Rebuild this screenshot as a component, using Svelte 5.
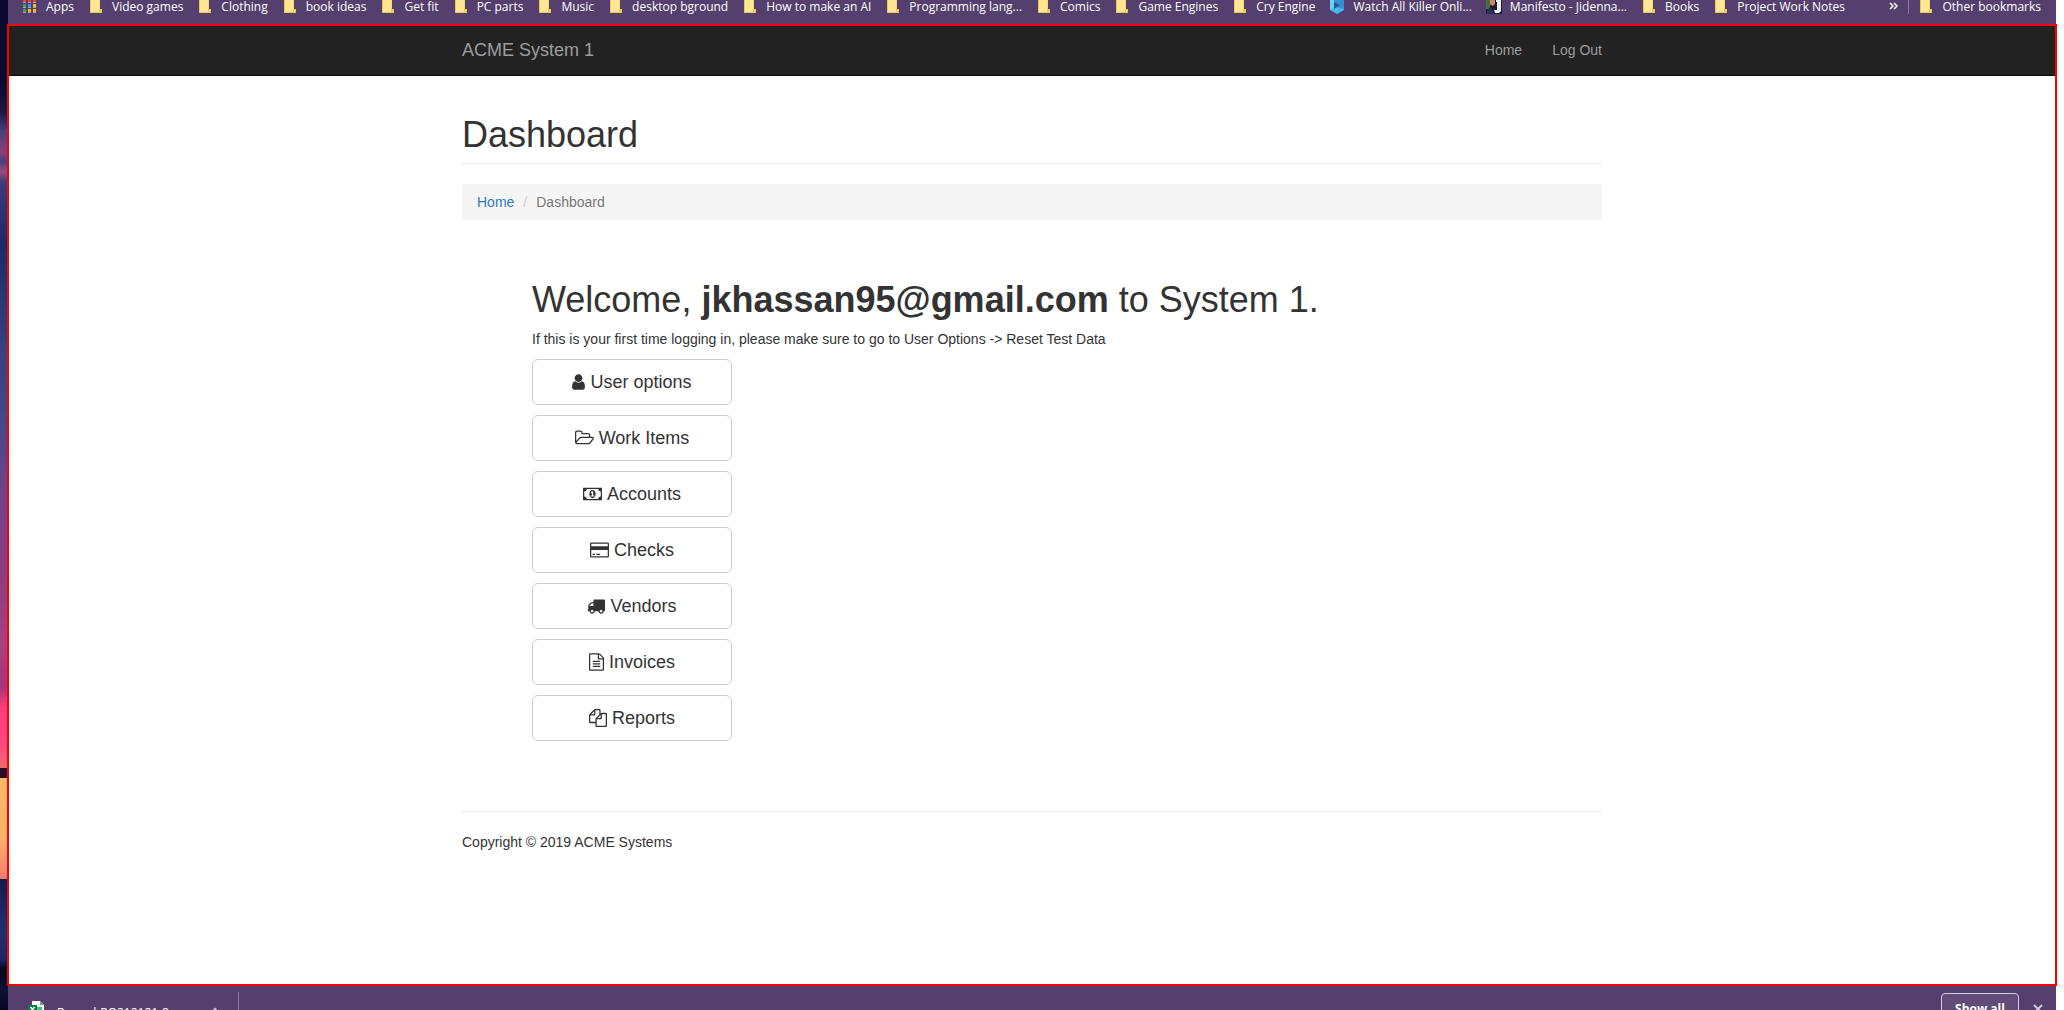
<script>
  const bookmarks = [
    { label: 'Video games' },
    { label: 'Clothing' },
    { label: 'book ideas' },
    { label: 'Get fit' },
    { label: 'PC parts' },
    { label: 'Music' },
    { label: 'desktop bground' },
    { label: 'How to make an AI' },
    { label: 'Programming lang...' },
    { label: 'Comics' },
    { label: 'Game Engines' },
    { label: 'Cry Engine' },
    { label: 'Watch All Killer Onli...', icon: 'cube' },
    { label: 'Manifesto - Jidenna...', icon: 'photo' },
    { label: 'Books' },
    { label: 'Project Work Notes' }
  ];

  const appDots = ['#ea4335', '#ea4335', '#ea4335', '#34a853', '#4285f4', '#fbbc05', '#34a853', '#fbbc05', '#fbbc05'];

  const actions = [
    {
      label: 'User options',
      box: '256 0 1280 1792',
      width: 13,
      path: 'M1536 1399q0 109-62.5 187t-150.5 78h-854q-88 0-150.5-78t-62.5-187q0-85 8.5-160.5t31.5-152 58.5-131 94-89 134.5-34.5q131 128 313 128t313-128q76 0 134.5 34.5t94 89 58.5 131 31.5 152 8.5 160.5zm-256-887q0 159-112.5 271.5t-271.5 112.5-271.5-112.5-112.5-271.5 112.5-271.5 271.5-112.5 271.5 112.5 112.5 271.5z'
    },
    {
      label: 'Work Items',
      box: '64 0 1920 1792',
      width: 19,
      path: 'M1845 931q0-35-53-35h-1088q-40 0-85.5 21.5t-71.5 52.5l-294 363q-18 24-18 40 0 35 53 35h1088q40 0 86-22t71-53l294-363q18-22 18-39zm-1141-163h768v-160q0-40-28-68t-68-28h-576q-40 0-68-28t-28-68v-64q0-40-28-68t-68-28h-320q-40 0-68 28t-28 68v853l256-315q44-53 116-87.5t140-34.5zm1269 163q0 62-46 120l-295 363q-43 53-116 87.5t-140 34.5h-1088q-92 0-158-66t-66-158v-960q0-92 66-158t158-66h320q92 0 158 66t66 158v32h544q92 0 158 66t66 158v160h192q54 0 99 24.5t67 70.5q15 32 15 68z'
    },
    {
      label: 'Accounts',
      box: '64 0 1920 1792',
      width: 19,
      path: 'M832 1152h384v-96h-128v-448h-114l-148 137 77 80q42-37 55-57h2v288h-128v96zm512-256q0 70-21 142t-59.5 134-101.5 101-138 39-138-39-101.5-101-59.5-134-21-142 21-142 59.5-134 101.5-101 138-39 138 39 101.5 101 59.5 134 21 142zm512 256v-512q-106 0-181-75t-75-181h-1152q0 106-75 181t-181 75v512q106 0 181 75t75 181h1152q0-106 75-181t181-75zm128-832v1152q0 26-19 45t-45 19h-1792q-26 0-45-19t-19-45v-1152q0-26 19-45t45-19h1792q26 0 45 19t19 45z'
    },
    {
      label: 'Checks',
      box: '64 0 1920 1792',
      width: 19,
      path: 'M1824 128q66 0 113 47t47 113v1216q0 66-47 113t-113 47h-1600q-66 0-113-47t-47-113v-1216q0-66 47-113t113-47h1600zm-1600 128q-13 0-22.500 9.500t-9.500 22.500v224h1664v-224q0-13-9.500-22.500t-22.500-9.500h-1600zm1600 1280q13 0 22.500-9.500t9.500-22.500v-608h-1664v608q0 13 9.500 22.500t22.500 9.500h1600zm-1504-128v-128h256v128h-256zm384 0v-128h384v128h-384z'
    },
    {
      label: 'Vendors',
      box: '0 0 1792 1792',
      width: 18,
      path: 'M640 1408q0-52-38-90t-90-38-90 38-38 90 38 90 90 38 90-38 38-90zm-384-512h384v-256h-158q-13 0-22 9l-195 195q-9 9-9 22v30zm1280 512q0-52-38-90t-90-38-90 38-38 90 38 90 90 38 90-38 38-90zm256-1088v1024q0 15-4 26.500t-13.500 18.500-16.500 11.500-23.500 6-22.500 2-25.500 0-22.500-.5q0 106-75 181t-181 75-181-75-75-181h-384q0 106-75 181t-181 75-181-75-75-181h-64q-3 0-22.500.5t-25.500 0-22.500-2-23.500-6-16.500-11.500-13.500-18.500-4-26.500q0-26 19-45t45-19v-320q0-8-.5-35t0-38 2.500-34.500 6.500-37 14-30.500 22.500-30l198-198q19-19 50.500-32t58.500-13h160v-192q0-26 19-45t45-19h1024q26 0 45 19t19 45z'
    },
    {
      label: 'Invoices',
      box: '128 0 1536 1792',
      width: 15,
      path: 'M1596 380q28 28 48 76t20 88v1152q0 40-28 68t-68 28h-1344q-40 0-68-28t-28-68v-1600q0-40 28-68t68-28h896q40 0 88 20t76 48zm-444-244v376h376q-10-29-22-41l-313-313q-12-12-41-22zm384 1528v-1024h-416q-40 0-68-28t-28-68v-416h-768v1536h1280zm-1024-864q0-14 9-23t23-9h704q14 0 23 9t9 23v64q0 14-9 23t-23 9h-704q-14 0-23-9t-9-23v-64zm736 224q14 0 23 9t9 23v64q0 14-9 23t-23 9h-704q-14 0-23-9t-9-23v-64q0-14 9-23t23-9h704zm0 256q14 0 23 9t9 23v64q0 14-9 23t-23 9h-704q-14 0-23-9t-9-23v-64q0-14 9-23t23-9h704z'
    },
    {
      label: 'Reports',
      box: '0 0 1792 1792',
      width: 18,
      path: 'M1696 384q40 0 68 28t28 68v1216q0 40-28 68t-68 28h-960q-40 0-68-28t-28-68v-288h-544q-40 0-68-28t-28-68v-672q0-40 20-88t48-76l408-408q28-28 76-48t88-20h416q40 0 68 28t28 68v328q68-40 128-40h416zm-544 213l-299 299h299v-299zm-640-384l-299 299h299v-299zm196 647l316-316v-416h-384v416q0 40-28 68t-68 28h-416v640h512v-256q0-40 20-88t48-76zm956 804v-1152h-384v416q0 40-28 68t-68 28h-416v640h896z'
    }
  ];
</script>

{#snippet folder()}
  <svg class="favicon" viewBox="0 0 16 14" aria-hidden="true">
    <path d="M2 0h10v9h2v4H2z" fill="#ffe694" />
    <path d="M2 0h1v12h8v-3h3v4H2z" fill="#e9c84e" />
    <path d="M12 10h1v2h-1zM11 0h1v9h-1z" fill="#f3d870" />
  </svg>
{/snippet}

<div class="desktop">
  <div class="wallpaper"></div>
  <div class="browser">
    <nav class="bookmarks" aria-label="Bookmarks">
      <a class="bookmark" href="#apps">
        <svg class="favicon" viewBox="0 0 16 14" aria-hidden="true">
          {#each appDots as color, i}
            <rect x={1 + (i % 3) * 5} y={-1 + Math.floor(i / 3) * 5} width="3" height="3" fill={color} />
            <rect x={1 + (i % 3) * 5} y={2 + Math.floor(i / 3) * 5} width="3" height="1" fill="#a99fb8" />
          {/each}
        </svg>
        Apps
      </a>
      {#each bookmarks as b}
        <a class="bookmark" href="#bookmark">
          {#if b.icon === 'cube'}
            <svg class="favicon" viewBox="0 0 16 14" aria-hidden="true">
              <path d="M1 0h14v9l-7 4-7-4z" fill="#3a8fd0" />
              <path d="M1 0h4v8l-4 2z" fill="#6fd0f5" />
              <path d="M1 10l5-3 9 2v1l-7 4z" fill="#42b8ec" />
              <path d="M5 2l6 3-6 4z" fill="#245a98" />
            </svg>
          {:else if b.icon === 'photo'}
            <svg class="favicon" viewBox="0 0 16 14" aria-hidden="true">
              <path d="M0 0h16v14H0z" fill="#1b1c2b" />
              <path d="M0 0h5v4l-2 5H0z" fill="#4e6b3c" />
              <path d="M4 0h5v4l-2 2-3-2z" fill="#c98a6a" />
              <path d="M1 10l4-3 3 7H1z" fill="#27345c" />
              <path d="M10 0h5v11l-2 2H9l-1-3h3V2h-1z" fill="#f2f2f2" />
            </svg>
          {:else}
            {@render folder()}
          {/if}
          {b.label}
        </a>
      {/each}
      <button class="overflow" aria-label="More bookmarks">
        <svg width="9" height="8" viewBox="0 0 9 8" fill="none" stroke="#fff" stroke-width="1.5">
          <path d="M1 1l3 3-3 3M5 1l3 3-3 3" />
        </svg>
      </button>
      <a class="bookmark other" href="#other">{@render folder()}Other bookmarks</a>
    </nav>

    <div class="viewport">
      <header class="navbar">
        <div class="container navrow">
          <a class="brand" href="#home">ACME System 1</a>
          <nav class="links" aria-label="Main">
            <a href="#home">Home</a>
            <a href="#logout">Log Out</a>
          </nav>
        </div>
      </header>

      <main class="container">
        <h1 class="title">Dashboard</h1>
        <ol class="breadcrumb">
          <li><a href="#home">Home</a></li>
          <li class="current">Dashboard</li>
        </ol>

        <section class="welcome">
          <h1>Welcome, <b>jkhassan95@gmail.com</b> to System 1.</h1>
          <p>If this is your first time logging in, please make sure to go to User Options -&gt; Reset Test Data</p>
          <div class="actions">
            {#each actions as a}
              <button class="action">
                <svg width={a.width} height="18" viewBox={a.box} aria-hidden="true"><path d={a.path} fill="currentColor" /></svg>
                {a.label}
              </button>
            {/each}
          </div>
        </section>

        <footer>Copyright © 2019 ACME Systems</footer>
      </main>
    </div>

    <div class="downloads">
      <button class="file">
        <svg class="sheet" viewBox="0 0 16 16" aria-hidden="true">
          <path d="M4 0h8l4 4v12H4z" fill="#fff" />
          <path d="M12 0l4 4h-4z" fill="#8a8a8a" />
          <path d="M9 6h5v10H9z" fill="#33c481" />
          <path d="M0 4h9v9H0z" fill="#107c41" />
          <path d="M2.500 6l4 5m0-5l-4 5" stroke="#fff" stroke-width="1.500" />
        </svg>
        <span class="name">Record-RO212121-8....</span>
        <svg class="caret" viewBox="0 0 8 6" fill="none" stroke="#c9c2d3" stroke-width="2"><path d="M1 5l3-3 3 3" /></svg>
      </button>
      <button class="showall">Show all</button>
      <button class="close" aria-label="Close">
        <svg width="10" height="10" viewBox="0 0 10 10" stroke="#d0cad8" stroke-width="2"><path d="M1 1l8 8M9 1l-8 8" /></svg>
      </button>
    </div>
  </div>
</div>

<style>
  :global(body) {
    background: #fff;
  }
  .desktop {
    display: grid;
    grid-template-columns: 7px minmax(0, 1fr) 7px;
    height: 100vh;
    overflow: hidden;
    font-family: 'Liberation Sans', Arial, sans-serif;
    font-size: 14px;
    line-height: 20px;
    color: #333;
  }
  button {
    font: inherit;
    color: inherit;
    background: none;
    border: 0;
    padding: 0;
  }
  a {
    text-decoration: none;
  }
  .wallpaper {
    margin-right: -1px;
    background: linear-gradient(
      #080a2c 0%, #0a0a30 8%, #1a1640 11%, #45417f 13%, #8a3f78 15%, #45417f 16%, #9a4a7c 17%,
      #3c3c78 18%, #1c2b63 24%, #34417f 34%, #46488a 42%, #6b4389 48%, #8a3d80 56%, #a8407e 64%,
      #a5357a 68%, #ff3b7c 70%, #ff4a80 74%, #ef6d70 76%, #2a0b2c 76%, #2a0b2c 77%,
      #ffb768 77%, #ffb06a 83%, #f57a72 87%, #101c4c 87%, #22306e 92%, #1b2760 95%, #05061c 96%, #0e1236 98%, #060820 100%
    );
  }
  .browser {
    display: flex;
    flex-direction: column;
    min-width: 0;
    min-height: 0;
  }
  .bookmarks,
  .downloads {
    display: flex;
    height: 24px;
    flex: none;
    margin: 0 1px;
    background: #553f6e;
    color: #fff;
    font-family: 'Open Sans', 'Noto Sans', sans-serif;
    font-size: 12px;
    line-height: 16px;
  }
  .bookmarks {
    gap: 14px;
    padding: 0 15px 0 14px;
    box-sizing: border-box;
    align-items: flex-start;
  }
  .bookmark {
    display: flex;
    gap: 8px;
    height: 14px;
    line-height: 13px;
    white-space: nowrap;
    color: #fff;
  }
  .favicon {
    width: 16px;
    height: 14px;
    flex: none;
  }
  .overflow {
    margin: 0 -4px 0 auto;
    height: 12px;
    display: flex;
    align-items: center;
  }
  .other {
    border-left: 1px solid #8a7a9c;
    padding-left: 9px;
  }
  .viewport {
    flex: 1;
    min-height: 0;
    border: 2px solid #f00;
    background: #fff;
    overflow: hidden;
  }
  .container {
    max-width: 1140px;
    margin: 0 auto;
  }
  .navbar {
    background: #222;
    border-bottom: 1px solid #080808;
    padding-bottom: 2px;
  }
  .navrow {
    display: flex;
    justify-content: space-between;
    align-items: center;
    height: 47px;
  }
  .navbar a {
    color: #9d9d9d;
  }
  .brand {
    font-size: 18px;
  }
  .links {
    display: flex;
    gap: 30px;
  }
  h1 {
    margin: 0;
    font-size: 36px;
    font-weight: 400;
    line-height: 40px;
  }
  .title {
    margin-bottom: 20px;
    padding: 39px 0 8px;
    border-bottom: 1px solid #eee;
  }
  .breadcrumb {
    display: flex;
    margin: 0;
    padding: 8px 15px;
    list-style: none;
    background: #f5f5f5;
    border-radius: 4px;
  }
  .breadcrumb a {
    color: #337ab7;
  }
  .current {
    color: #777;
  }
  .current::before {
    content: '/';
    padding: 0 9px;
    color: #ccc;
  }
  .welcome {
    padding: 60px 70px 70px;
  }
  .welcome p {
    margin: 9px 0 10px;
  }
  .actions {
    display: flex;
    flex-direction: column;
    gap: 10px;
    width: 200px;
  }
  .action {
    display: flex;
    align-items: center;
    justify-content: center;
    gap: 5px;
    padding: 10px 16px;
    border: 1px solid #ccc;
    border-radius: 6px;
    background: #fff;
    font-size: 18px;
    line-height: 24px;
  }
  footer {
    border-top: 1px solid #eee;
    padding: 20px 0;
  }
  .downloads {
    padding: 0 13px 0 20px;
    gap: 14px;
  }
  .file {
    display: flex;
    align-items: flex-start;
    gap: 13px;
    height: 32px;
    margin: 6px auto 0 0;
    padding: 9px 19px 0 0;
    box-sizing: border-box;
    border-right: 1px solid #8a7a9c;
  }
  .sheet {
    width: 16px;
    height: 16px;
  }
  .name {
    margin-top: 4px;
  }
  .caret {
    width: 8px;
    height: 6px;
    margin: 6px 0 0 17px;
  }
  .showall {
    width: 78px;
    height: 32px;
    flex: none;
    margin-top: 7px;
    border: 1px solid #d3cddb;
    border-radius: 4px;
    background: #614c79;
    font-weight: 700;
  }
  .close {
    display: flex;
    margin-top: 18px;
    height: 10px;
  }
</style>
